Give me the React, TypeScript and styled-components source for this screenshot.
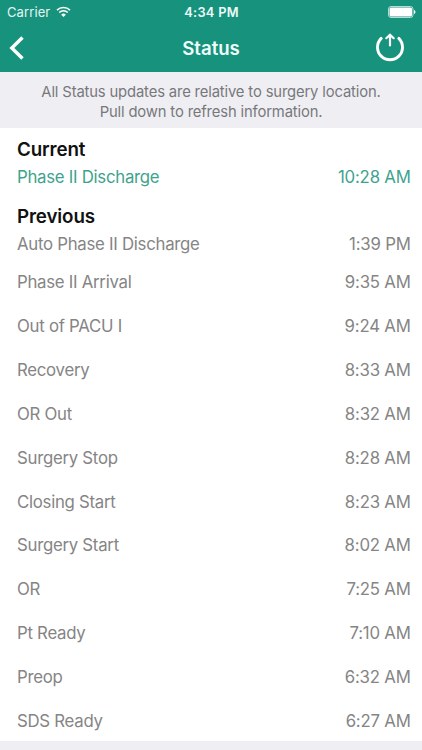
import React from "react";
import styled, { createGlobalStyle } from "styled-components";

const Global = createGlobalStyle`
  * { box-sizing: border-box; }
  body { margin: 0; background: #fff; font-family: Inter, "Liberation Sans", sans-serif; }
`;
const Screen = styled.main`width: 422px; height: 750px; overflow: hidden; display: flex; flex-direction: column; background: #fff;`;
const Header = styled.header`height: 72px; flex: none; background: #17937d; color: #fff;`;
const StatusBar = styled.div`height: 24px; padding: 0 6px 0 7px; display: grid; grid-template-columns: 1fr auto 1fr; align-items: center; font-size: 13px;`;
const Carrier = styled.div`display: flex; align-items: center; gap: 6px; color: #e3f6f1; letter-spacing: 0.1px;`;
const Clock = styled.div`font-weight: 600; font-size: 12.8px; letter-spacing: 0.3px; color: #eefbf8;`;
const Battery = styled.div`justify-self: end; display: flex;`;
const NavBar = styled.div`height: 48px; padding: 0 17px 1px 9px; display: grid; grid-template-columns: 42px 1fr 34px; align-items: center;`;
const Title = styled.h1`margin: 0; text-align: center; font-size: 18.6px; font-weight: 600; line-height: 24px; color: #f0fdfa;`;
const IconButton = styled.button<{ $end?: boolean }>`display: flex; padding: 0; border: 0; background: none; color: inherit; justify-self: ${p => p.$end ? "end" : "start"};`;
const Notice = styled.p`margin: 0; height: 56px; flex: none; padding-top: 9.5px; background: #efeff3; color: #78787c; text-align: center; font-size: 14.8px; letter-spacing: -0.15px; line-height: 20.5px; white-space: nowrap;`;
const Heading = styled.h2<{ $h: number }>`margin: 0; height: ${p => p.$h}px; flex: none; padding-left: 17px; display: flex; align-items: flex-end; font-size: 18.8px; letter-spacing: -0.15px; line-height: 24px; font-weight: 600; color: #111;`;
const Row = styled.div<{ $compact?: boolean; $active?: boolean }>`
  height: ${p => p.$active ? 30.5 : p.$compact ? 31 : 43.85}px;
  flex: none;
  padding: 0 11.5px 0 17px;
  display: flex;
  justify-content: space-between;
  align-items: center;
  font-size: 16.8px;
  line-height: 20px;
  color: ${p => p.$active ? "#3da38e" : "#858585"};
`;
const History = styled.section`flex: none; height: 481.5px; padding-top: 1px; overflow: hidden;`;
const Label = styled.span`letter-spacing: -0.27px;`;
const Time = styled.span`letter-spacing: -0.2px; margin-right: -0.2px;`;
const Footer = styled.footer`flex: 1; background: #efeff3;`;

const rows = [
  ["Phase II Arrival", "9:35 AM"], ["Out of PACU I", "9:24 AM"], ["Recovery", "8:33 AM"],
  ["OR Out", "8:32 AM"], ["Surgery Stop", "8:28 AM"], ["Closing Start", "8:23 AM"],
  ["Surgery Start", "8:02 AM"], ["OR", "7:25 AM"], ["Pt Ready", "7:10 AM"],
  ["Preop", "6:32 AM"], ["SDS Ready", "6:27 AM"],
];

export default function App() {
  return <Screen>
    <Global />
    <Header>
      <StatusBar>
        <Carrier>Carrier
          <svg width="15" height="12" viewBox="0 0 15 12" fill="none" stroke="white" strokeWidth="1.5"><path d="M1 4.1a9.2 9.2 0 0 1 13 0M3.2 6.6a6 6 0 0 1 8.6 0"/><path d="M5.2 8.7a3.2 3.2 0 0 1 4.6 0L7.5 11Z" fill="white" stroke="none"/></svg>
        </Carrier>
        <Clock>4:34 PM</Clock>
        <Battery><svg width="28" height="12" viewBox="0 0 28 12"><rect x=".5" y=".5" width="24.5" height="11" rx="2.5" fill="none" stroke="#b6ddd5"/><rect x="1.5" y="1.5" width="22.5" height="9" rx="1.5" fill="white"/><path d="M26 4v4q1.5-.5 1.5-2T26 4" fill="white"/></svg></Battery>
      </StatusBar>
      <NavBar>
        <IconButton aria-label="Back"><svg width="16" height="24" viewBox="0 0 16 24" fill="none" stroke="white" strokeWidth="3.4"><path d="M13.5 1.5 2.8 12l10.7 10.5"/></svg></IconButton>
        <Title>Status</Title>
        <IconButton $end aria-label="Refresh"><svg width="30" height="30" viewBox="0 0 30 30" fill="none" stroke="white" strokeWidth="2.9" strokeLinecap="round"><path d="M6.2 5.4a12.5 12.5 0 1 0 17.6 0"/><path d="M15 12.5V1.8M11.3 5.2 15 1.7l3.7 3.5" strokeWidth="2.2"/></svg></IconButton>
      </NavBar>
    </Header>
    <Notice>All Status updates are relative to surgery location.<br />Pull down to refresh information.</Notice>
    <Heading $h={33.5}>Current</Heading>
    <Row $compact $active><Label>Phase II Discharge</Label><Time>10:28 AM</Time></Row>
    <Heading $h={36.5}>Previous</Heading>
    <Row $compact><Label>Auto Phase II Discharge</Label><Time>1:39 PM</Time></Row>
    <History>
      {rows.map(([label, time]) => <Row key={label}><Label>{label}</Label><Time>{time}</Time></Row>)}
    </History>
    <Footer />
  </Screen>;
}
